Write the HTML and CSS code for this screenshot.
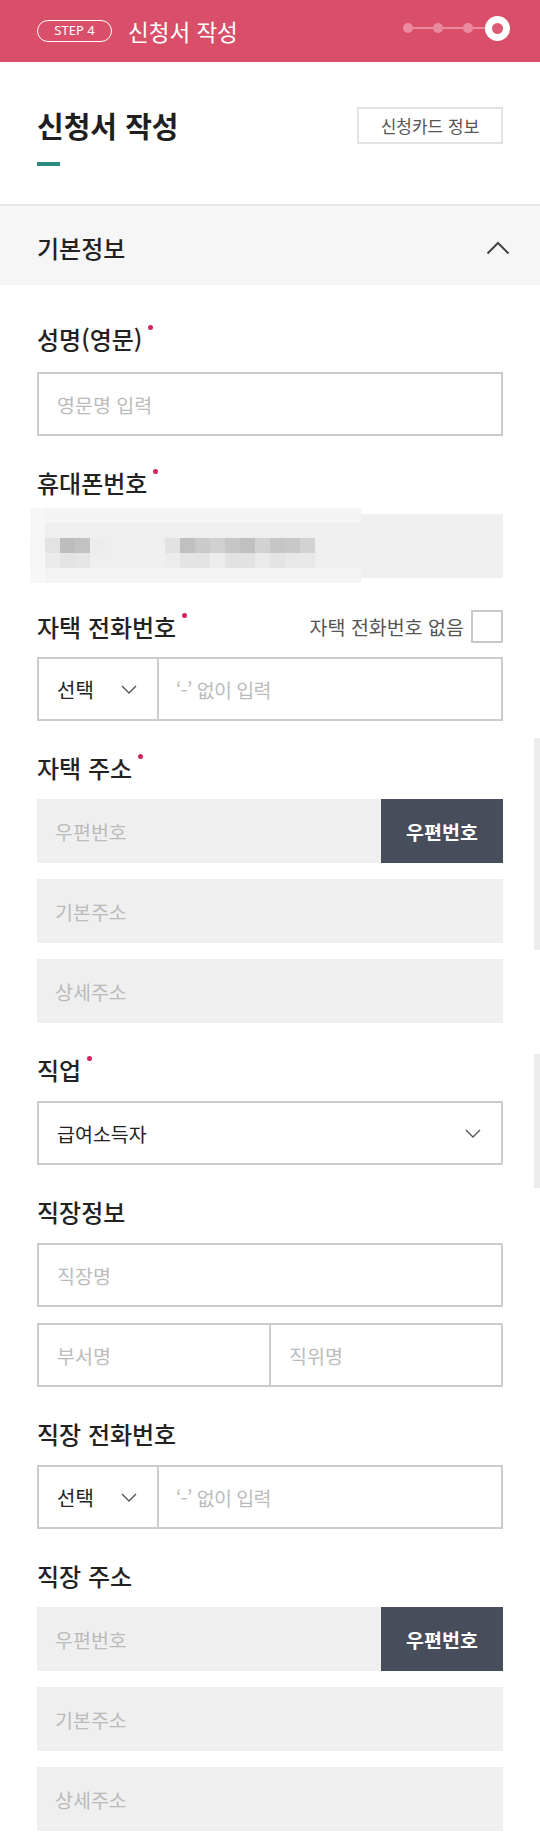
FILE: index.html
```html
<!DOCTYPE html>
<html lang="ko">
<head>
<meta charset="utf-8">
<title>신청서 작성</title>
<link rel="stylesheet" href="styles.css">
</head>
<body>
<header class="topbar">
  <div class="step">
    <span class="step-badge">STEP 4</span>
    <span class="step-title">신청서 작성</span>
  </div>
  <div class="progress">
    <span class="dot"></span><span class="line"></span>
    <span class="dot"></span><span class="line"></span>
    <span class="dot"></span><span class="line short"></span>
    <span class="ring"></span>
  </div>
</header>

<section class="page-head">
  <div class="page-head-row">
    <h1 class="page-title">신청서 작성</h1>
    <button class="card-info" type="button">신청카드 정보</button>
  </div>
  <span class="title-bar"></span>
</section>

<div class="section-bar">
  <h2 class="section-title">기본정보</h2>
  <svg class="chev-up" width="24" height="14" viewBox="0 0 24 14"><polyline points="1.5,12.5 12,2 22.5,12.5" fill="none" stroke="#444" stroke-width="2"/></svg>
</div>

<main class="form">
  <div class="field first">
    <div class="label-row"><span class="label req">성명(영문)</span></div>
    <input class="text-input" type="text" placeholder="영문명 입력">
  </div>

  <div class="field">
    <div class="label-row"><span class="label req">휴대폰번호</span></div>
    <div class="masked">
      <div class="masked-field"></div>
      <div class="blur">
        <div class="blur-row r3"></div>
        <div class="blur-row r4"></div>
      </div>
    </div>
  </div>

  <div class="field">
    <div class="label-row tall">
      <span class="label req">자택 전화번호</span>
      <label class="none-check"><span>자택 전화번호 없음</span><span class="checkbox"></span></label>
    </div>
    <div class="tel-row">
      <div class="tel-select"><span>선택</span>
        <svg width="16" height="9" viewBox="0 0 16 9"><polyline points="1,1 8,8 15,1" fill="none" stroke="#555" stroke-width="1.4"/></svg>
      </div>
      <input class="tel-input" type="text" placeholder="‘-’ 없이 입력">
    </div>
  </div>

  <div class="field">
    <div class="label-row"><span class="label req">자택 주소</span></div>
    <div class="stack">
      <div class="zip-row">
        <input class="gray-input" type="text" placeholder="우편번호">
        <button class="zip-btn" type="button">우편번호</button>
      </div>
      <input class="gray-input" type="text" placeholder="기본주소">
      <input class="gray-input" type="text" placeholder="상세주소">
    </div>
  </div>

  <div class="field">
    <div class="label-row"><span class="label req">직업</span></div>
    <div class="select-box"><span>급여소득자</span>
      <svg width="16" height="9" viewBox="0 0 16 9"><polyline points="1,1 8,8 15,1" fill="none" stroke="#555" stroke-width="1.4"/></svg>
    </div>
  </div>

  <div class="field">
    <div class="label-row"><span class="label">직장정보</span></div>
    <div class="stack">
      <input class="text-input" type="text" placeholder="직장명">
      <div class="split-row">
        <input class="split-input" type="text" placeholder="부서명">
        <input class="split-input" type="text" placeholder="직위명">
      </div>
    </div>
  </div>

  <div class="field">
    <div class="label-row"><span class="label">직장 전화번호</span></div>
    <div class="tel-row">
      <div class="tel-select"><span>선택</span>
        <svg width="16" height="9" viewBox="0 0 16 9"><polyline points="1,1 8,8 15,1" fill="none" stroke="#555" stroke-width="1.4"/></svg>
      </div>
      <input class="tel-input" type="text" placeholder="‘-’ 없이 입력">
    </div>
  </div>

  <div class="field">
    <div class="label-row"><span class="label">직장 주소</span></div>
    <div class="stack">
      <div class="zip-row">
        <input class="gray-input" type="text" placeholder="우편번호">
        <button class="zip-btn" type="button">우편번호</button>
      </div>
      <input class="gray-input" type="text" placeholder="기본주소">
      <input class="gray-input" type="text" placeholder="상세주소">
    </div>
  </div>
</main>

<span class="scroll-hint one"></span>
<span class="scroll-hint two"></span>
</body>
</html>
```

FILE: styles.css
```css
* { box-sizing: border-box; margin: 0; padding: 0; }
html { scrollbar-width: none; }
html::-webkit-scrollbar { display: none; }
body {
  width: 540px;
  margin: 0;
  background: #fff;
  color: #222;
  font-family: "Noto Sans CJK KR", "Noto Sans", sans-serif;
  position: relative;
  padding-bottom: 40px;
}
input, button { font-family: inherit; outline: none; }

/* top bar */
.topbar {
  height: 62px;
  background: #d94f6a;
  display: flex;
  align-items: center;
  justify-content: space-between;
  padding: 0 30px 0 37px;
}
.step { display: flex; align-items: center; margin-top: -1px; }
.step-badge {
  width: 75px;
  height: 22px;
  border: 1.5px solid #fff;
  border-radius: 11px;
  color: #fff;
  font-family: "Noto Sans", "Liberation Sans", sans-serif;
  font-size: 13px;
  line-height: 1;
  display: flex;
  align-items: center;
  justify-content: center;
}
.step-title { margin-left: 16px; color: #fff; font-size: 22.5px; line-height: 30px; }
.progress { display: flex; align-items: center; margin-top: -6px; }
.dot { width: 10px; height: 10px; border-radius: 50%; background: #ea8ba0; }
.line { width: 20px; height: 1.5px; background: #ea8ba0; }
.line.short { width: 12px; }
.ring { width: 25px; height: 25px; border-radius: 50%; border: 7px solid #fff; background: #dc5a74; }

/* page head */
.page-head { padding: 45px 37px 38px; border-bottom: 2px solid #e4e4e4; }
.page-head-row { display: flex; justify-content: space-between; align-items: center; }
.page-title { font-size: 29px; font-weight: 700; line-height: 37px; color: #1f1f1f; }
.card-info {
  width: 146px; height: 37px;
  border: 2px solid #e2e2e2; background: #fff;
  font-size: 17px; color: #555;
}
.title-bar { display: block; width: 23px; height: 4px; background: #2a8c7d; margin-top: 18px; }

/* section bar */
.section-bar {
  height: 79px;
  background: #f6f6f6;
  display: flex;
  align-items: center;
  justify-content: space-between;
  padding: 4px 30px 0 37px;
}
.section-title { font-size: 24px; font-weight: 500; color: #222; line-height: 30px; }

/* form */
.form { padding: 0 37px; }
.field { margin-top: 32px; }
.field.first { margin-top: 39px; }
.label-row { height: 30px; margin-bottom: 16px; display: flex; align-items: center; justify-content: space-between; }
.field.first .label-row { margin-bottom: 18px; }
.label-row.tall { height: 33px; margin-bottom: 14px; }
.label { font-size: 24px; font-weight: 500; line-height: 30px; color: #222; }
.req::after {
  content: "";
  display: inline-block;
  width: 5px; height: 5px;
  border-radius: 50%;
  background: #d0245a;
  margin-left: 6px;
  vertical-align: top;
  margin-top: 1px;
}

.text-input {
  display: block; width: 100%; height: 64px;
  border: 2px solid #cccccc; background: #fff;
  padding: 0 18px; font-size: 19.5px; color: #222;
}
::placeholder { color: #bbbbbb; }

/* masked phone */
.masked { position: relative; height: 64px; }
.masked-field { height: 64px; background: #efefef; }
.blur {
  position: absolute; left: -7px; top: -6px; width: 331px; height: 75px;
  background: linear-gradient(to right, #f7f7f7 0 15px, transparent 15px),
              linear-gradient(#f4f4f4 0 15px, #efefef 15px 60px, #f3f3f3 60px);
  padding-top: 30px;
}
.blur-row { height: 15px; }
.blur-row.r3 {
  background: linear-gradient(to right,
    #f6f6f6 0 15px, #e3e3e3 15px 30px, #bdbdbd 30px 45px, #c2c2c2 45px 60px, #ececec 60px 75px,
    #efefef 75px 135px, #e2e2e2 135px 150px, #c0c0c0 150px 165px, #cacaca 165px 180px,
    #d0d0d0 180px 195px, #c6c6c6 195px 210px, #c0c0c0 210px 225px, #d2d2d2 225px 240px,
    #c6c6c6 240px 255px, #c8c8c8 255px 270px, #d2d2d2 270px 285px, #efefef 285px);
}
.blur-row.r4 {
  background: linear-gradient(to right,
    #f6f6f6 0 15px, #ebebeb 15px 30px, #e4e4e4 30px 45px, #e6e6e6 45px 60px, #efefef 60px 135px,
    #ececec 135px 150px, #e4e4e4 150px 180px, #ececec 180px 195px, #e2e2e2 195px 225px,
    #eaeaea 225px 240px, #e4e4e4 240px 255px, #e8e8e8 255px 285px, #efefef 285px);
}

/* home tel */
.none-check { display: flex; align-items: center; gap: 7px; font-size: 19.5px; color: #555; }
.checkbox { width: 32px; height: 33px; border: 2px solid #c8c8c8; background: #fff; }

.tel-row { display: flex; height: 64px; border: 2px solid #cccccc; }
.tel-select {
  width: 120px; flex: none;
  border-right: 2px solid #cccccc;
  display: flex; align-items: center; justify-content: space-between;
  padding: 0 20px 0 18px;
  font-size: 20px; color: #222;
}
.tel-input { flex: 1; min-width: 0; border: 0; padding: 0 17px; font-size: 19.5px; letter-spacing: -0.6px; background: #fff; }

/* stacked inputs / address */
.stack { display: flex; flex-direction: column; gap: 16px; }
.zip-row { display: flex; height: 64px; }
.gray-input {
  display: block; width: 100%; height: 64px; border: 0;
  background: #efefef; padding: 0 18px; font-size: 19.5px; color: #222;
}
.zip-row .gray-input { flex: 1; min-width: 0; }
.zip-btn {
  width: 122px; flex: none; border: 0;
  background: #474d5a; color: #fff; font-size: 19.5px; font-weight: 700;
}

/* select */
.select-box {
  height: 64px; border: 2px solid #cccccc;
  display: flex; align-items: center; justify-content: space-between;
  padding: 0 20px 0 18px; font-size: 19.5px; color: #222;
}

.split-row { display: grid; grid-template-columns: 230px 1fr; height: 64px; border: 2px solid #cccccc; }
.split-input { border: 0; min-width: 0; padding: 0 18px; font-size: 19.5px; background: #fff; }
.split-input + .split-input { border-left: 2px solid #cccccc; }

.scroll-hint { position: absolute; right: 0; width: 6px; background: #ececec; }
.scroll-hint.one { top: 738px; height: 212px; }
.scroll-hint.two { top: 1054px; height: 134px; }
```
